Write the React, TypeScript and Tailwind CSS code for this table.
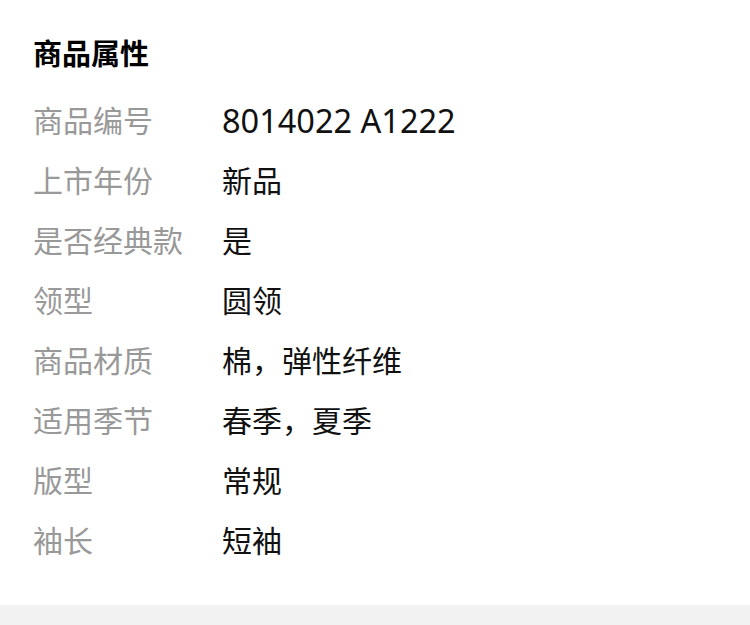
import React from "react";

const rows: [string, string][] = [
  ["商品编号", "8014022 A1222"],
  ["上市年份", "新品"],
  ["是否经典款", "是"],
  ["领型", "圆领"],
  ["商品材质", "棉，弹性纤维"],
  ["适用季节", "春季，夏季"],
  ["版型", "常规"],
  ["袖长", "短袖"],
];

export default function App() {
  return (
    <div
      className="w-[750px] h-[625px] bg-white flex flex-col overflow-hidden"
      style={{ fontFamily: '"Noto Sans", "Noto Sans CJK SC", sans-serif' }}
    >
      <div className="px-[33px] pt-[34px] pb-[34px]">
        <div className="text-[29px] leading-[40px] font-bold text-black">商品属性</div>
        <div className="mt-[17px] flex flex-col">
          {rows.map(([k, v], i) => (
            <div key={k} className="flex items-center h-[60px]">
              <div className="w-[189px] shrink-0 text-[30px] leading-[40px] text-[#999999]">{k}</div>
              <div className={`${i === 0 ? "text-[32.5px]" : "text-[30px]"} leading-[40px] text-[#111111]`}>{v}</div>
            </div>
          ))}
        </div>
      </div>
      <div className="flex-1 bg-[#f2f2f2]" />
    </div>
  );
}
